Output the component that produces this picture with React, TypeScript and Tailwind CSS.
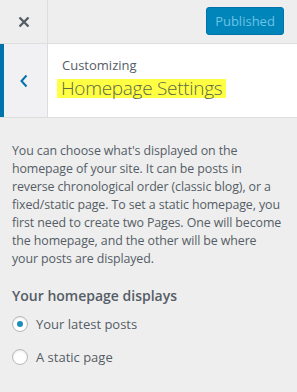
const lines = [
  "You can choose what's displayed on the",
  "homepage of your site. It can be posts in",
  "reverse chronological order (classic blog), or a",
  "fixed/static page. To set a static homepage, you",
  "first need to create two Pages. One will become",
  "the homepage, and the other will be where",
  "your posts are displayed.",
];

export default function App() {
  const font = { fontFamily: '"Open Sans", "Noto Sans", sans-serif' };
  return (
    <div className="w-[297px] h-[392px] bg-[#eeeeee] text-[#555d66] overflow-hidden" style={font}>
      {/* Top bar */}
      <div className="flex h-[44px] border-b border-[#dddddd]">
        <div className="w-[48px] flex items-center justify-center border-r border-[#dddddd]">
          <svg width="12" height="12" viewBox="0 0 12 12">
            <path d="M1.5 1.5 L10.5 10.5 M10.5 1.5 L1.5 10.5" stroke="#555d66" strokeWidth="2.4" />
          </svg>
        </div>
        <div className="flex-1 flex items-start justify-end pt-[7px] pr-[13px]">
          <button className="w-[78px] h-[28px] rounded-[3px] bg-[#0085ba] border border-[#0073aa] text-[#6ec3e4] text-[13px] leading-none">
            Published
          </button>
        </div>
      </div>

      {/* Section header */}
      <div className="flex h-[74px] bg-white border-b border-[#dddddd]">
        <div className="w-[48px] flex items-center bg-[#f1f1f3] border-r border-[#dddddd]">
          <div className="w-[4px] h-full bg-[#0073aa]" />
          <div className="flex-1 flex justify-center pr-[4px]">
            <svg width="10" height="14" viewBox="0 0 10 14">
              <path d="M7.5 1.5 L2.5 7 L7.5 12.5" fill="none" stroke="#0073aa" strokeWidth="2" />
            </svg>
          </div>
        </div>
        <div className="flex-1 pl-[9px] pt-[13px]">
          <div className="text-[13px] leading-[16px] text-[#555d66] pl-[5px]">Customizing</div>
          <div className="mt-[6px] inline-block bg-[#ffff44] px-[4px] text-[19px] leading-[19px] font-light text-[#5c6a4a] tracking-[-0.3px]">
            Homepage Settings
          </div>
        </div>
      </div>

      {/* Body */}
      <div className="px-[12px] pt-[24px]">
        <p className="text-[12.4px] leading-[18px] text-[#555d66] tracking-[-0.1px]">
          {lines.map((l) => (
            <span key={l} className="block whitespace-nowrap">
              {l}
            </span>
          ))}
        </p>
        <div className="mt-[19px] text-[14px] leading-[18px] font-semibold text-[#555d66]">Your homepage displays</div>
        <div className="mt-[11px] flex flex-col gap-[17px]">
          <label className="flex items-center gap-[8px] text-[13px] leading-[16px]">
            <span className="w-[16px] h-[16px] rounded-full border border-[#b4b9be] bg-white flex items-center justify-center shadow-[inset_0_1px_2px_rgba(0,0,0,0.1)]">
              <span className="w-[6px] h-[6px] rounded-full bg-[#1e8cbe]" />
            </span>
            Your latest posts
          </label>
          <label className="flex items-center gap-[8px] text-[13px] leading-[16px]">
            <span className="w-[16px] h-[16px] rounded-full border border-[#b4b9be] bg-white shadow-[inset_0_1px_2px_rgba(0,0,0,0.1)]" />
            A static page
          </label>
        </div>
      </div>
    </div>
  );
}
